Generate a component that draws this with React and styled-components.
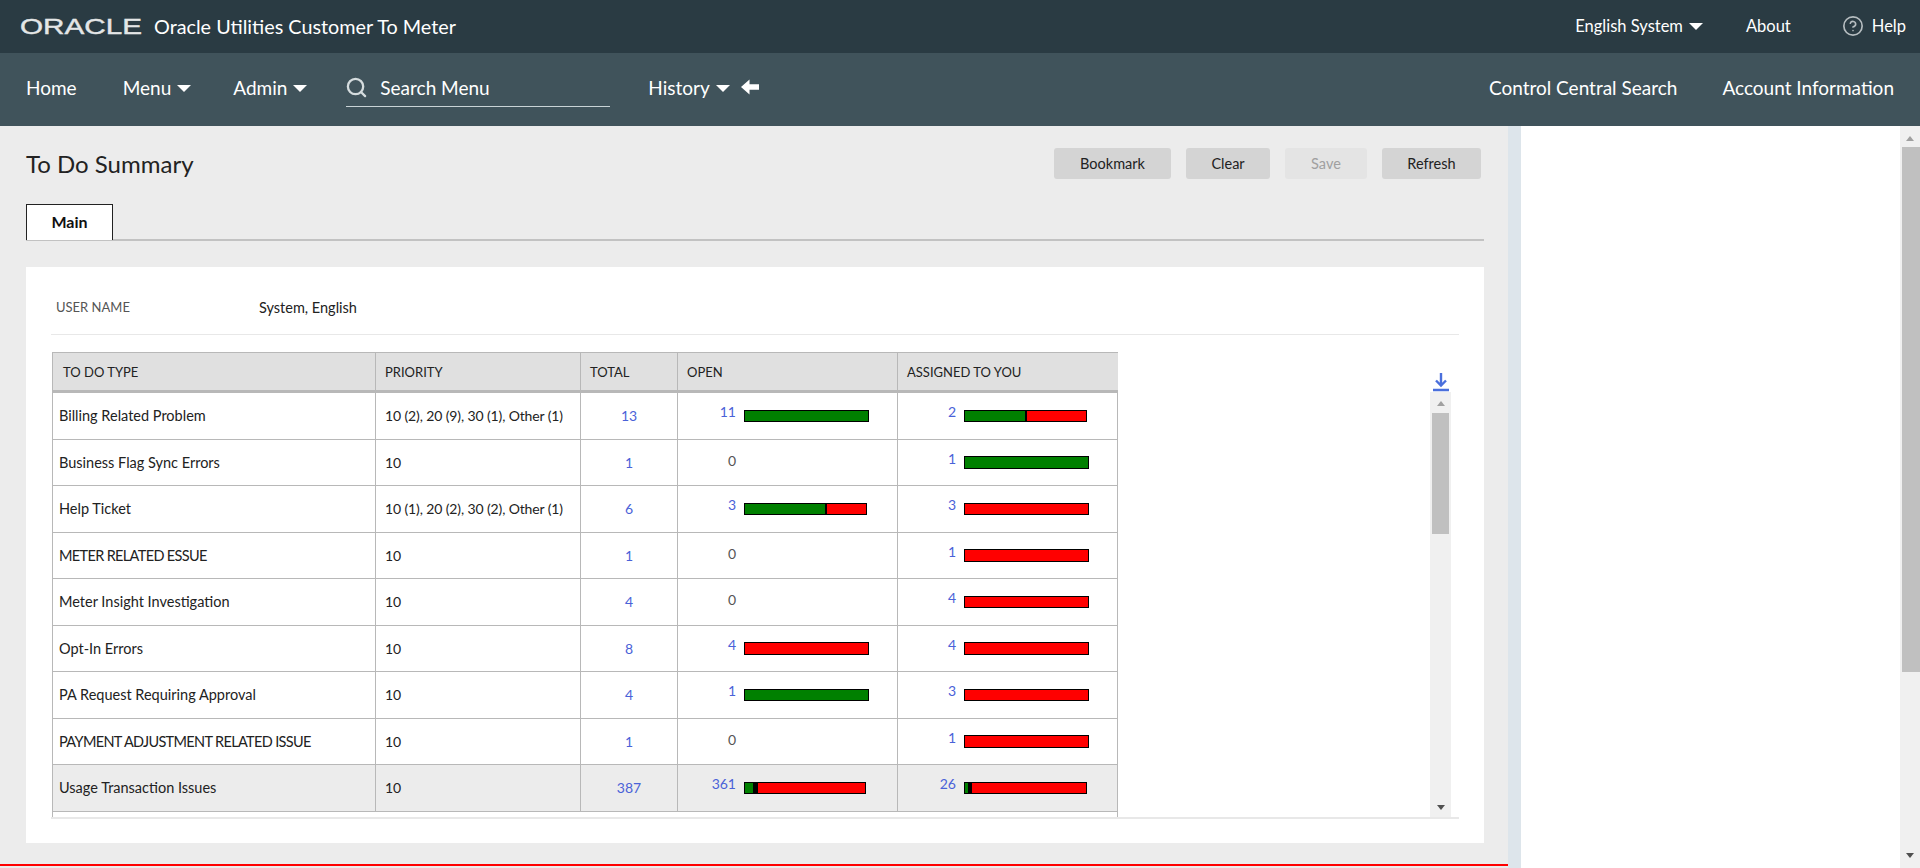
import React from 'react';
import styled, { createGlobalStyle } from 'styled-components';
import { Search, CircleHelp } from 'lucide-react';

const GlobalStyle = createGlobalStyle`
    html, body {
        margin: 0;
        height: 100%;
        overflow: hidden;
        background: #fff;
    }
    * {
        box-sizing: border-box;
    }
    body {
        font-family: Lato, "Open Sans", sans-serif;
    }
`;

const Page = styled.div`
    display: flex;
    flex-direction: column;
    width: 1920px;
    height: 868px;
`;

const TopBar = styled.header`
    display: flex;
    align-items: center;
    height: 53px;
    padding: 0 14px 2px 19px;
    background: #2a3b43;
    color: #fff;
    font-size: 19.8px;
`;

const Logo = styled.svg`
    width: 125px;
    height: 24px;
    margin-right: 10px;
    fill: #e4e6e7;
    stroke: #e4e6e7;
    stroke-width: 0.4;
`;

const Spacer = styled.div`
    flex: 1;
`;

const TopItem = styled.span`
    display: flex;
    align-items: center;
    margin-left: ${props => props.$gap || 0}px;
    font-size: 16.5px;
`;

const HelpIcon = styled(CircleHelp)`
    width: 22px;
    height: 22px;
    margin-right: 8px;
    color: #b6bdc0;
`;

const Caret = styled.i`
    display: inline-block;
    width: 0;
    height: 0;
    margin-left: 6px;
    margin-top: 2px;
    border-left: 7px solid transparent;
    border-right: 7px solid transparent;
    border-top: 7px solid #fff;
`;

const NavBar = styled.nav`
    display: flex;
    align-items: center;
    height: 73px;
    padding: 0 26px 5px 26px;
    background: #40535b;
    color: #fff;
    font-size: 19px;
`;

const NavItem = styled.span`
    display: flex;
    align-items: center;
    margin-left: ${props => props.$gap || 0}px;
`;

const SearchBox = styled.div`
    display: flex;
    align-items: center;
    gap: 12px;
    width: 264px;
    height: 40px;
    margin-left: 39px;
    padding-top: 2px;
    border-bottom: 1px solid #c9d3d6;
`;

const SearchIcon = styled(Search)`
    width: 23px;
    height: 23px;
    margin-left: -1px;
    color: #d5dcde;
`;

const BackIcon = styled.svg`
    width: 18px;
    height: 16px;
    margin-left: 11px;
    fill: #fff;
`;

const Main = styled.div`
    display: flex;
    flex: 1;
    min-height: 0;
`;

const LeftPane = styled.main`
    display: flex;
    flex-direction: column;
    width: 1508px;
    padding: 22px 24px 0 26px;
    background: #ececec;
`;

const TitleRow = styled.div`
    display: flex;
    align-items: center;
    height: 31px;
    padding-right: 3px;
`;

const Title = styled.h1`
    flex: 1;
    margin: 0;
    font-size: 24px;
    font-weight: 400;
    color: #222;
`;

const Button = styled.button`
    width: ${props => props.$w}px;
    height: 31px;
    margin-left: ${props => props.$gap}px;
    border: 0;
    border-radius: 3px;
    background: ${props => props.disabled ? '#e4e4e4' : '#d4d4d4'};
    color: ${props => props.disabled ? '#a0a0a0' : '#222'};
    font-family: inherit;
    font-size: 14.5px;
`;

const TabStrip = styled.div`
    display: flex;
    height: 37px;
    margin-top: 25px;
    border-bottom: 2px solid #c2c2c2;
`;

const Tab = styled.div`
    width: 87px;
    height: 36px;
    padding-top: 7px;
    border: 1px solid #222;
    border-bottom: 0;
    background: #fff;
    color: #111;
    font-size: 16px;
    font-weight: 700;
    text-align: center;
`;

const Card = styled.section`
    height: 576px;
    margin-top: 26px;
    padding: 0 25px;
    background: #fff;
`;

const InfoRow = styled.div`
    display: flex;
    align-items: center;
    height: 68px;
    padding: 13px 0 0 5px;
    border-bottom: 1px solid #e8e8e8;
    font-size: 14.5px;
    color: #222;
`;

const InfoLabel = styled.span`
    width: 203px;
    font-size: 13px;
    color: #555;
`;

const TableArea = styled.div`
    display: flex;
    justify-content: space-between;
    height: 467px;
    margin-top: 17px;
    padding: 0 8px 0 1px;
    border-bottom: 2px solid #e8e8e8;
    overflow: hidden;
`;

const DataTable = styled.div`
    width: 1066px;
    height: 465px;
    overflow: hidden;
    font-size: 14px;
    color: #222;
`;

const Row = styled.div`
    display: grid;
    grid-template-columns: 323px 205px 97px 220px 221px;
    height: ${props => props.$head ? '41px' : '46.5px'};
    border: 1px solid #b8b8b8;
    border-top: 0;
    border-bottom: ${props => props.$head ? '3px' : '1px'} solid #b8b8b8;
    background: ${props => props.$shaded ? '#ececec' : '#fff'};
    &:first-child {
        border-top: 1px solid #b8b8b8;
    }
`;

const HeadCell = styled.div`
    display: flex;
    align-items: center;
    padding-left: ${props => props.$pad || 9}px;
    border-right: 1px solid #b8b8b8;
    background: #e0e0e0;
    font-size: 13px;
    &:last-child {
        border-right: 0;
    }
`;

const NameCell = styled.div`
    display: flex;
    align-items: center;
    padding-left: 6px;
    border-right: 1px solid #b8b8b8;
    font-size: 14.5px;
    letter-spacing: ${props => props.$caps ? '-0.65px' : '0'};
`;

const PriorityCell = styled.div`
    display: flex;
    align-items: center;
    padding-left: 9px;
    border-right: 1px solid #b8b8b8;
    letter-spacing: -0.12px;
`;

const TotalCell = styled.div`
    display: flex;
    align-items: center;
    justify-content: center;
    border-right: 1px solid #b8b8b8;
    color: #4a62d8;
`;

const CountCell = styled.div`
    display: flex;
    align-items: flex-start;
    border-right: 1px solid #b8b8b8;
    &:last-child {
        border-right: 0;
    }
`;

const Count = styled.span`
    width: 58px;
    padding-top: ${props => props.$zero ? 13 : 11}px;
    line-height: 16px;
    text-align: right;
    color: ${props => props.$zero ? '#555' : '#4a62d8'};
`;

const Bar = styled.div`
    display: flex;
    margin: 16.5px 0 0 8px;
    height: 12.5px;
`;

const Segment = styled.div`
    width: ${props => props.$w}px;
    border: 1px solid #000;
    background: ${props => props.$color};
`;

const ScrollColumn = styled.div`
    display: flex;
    flex-direction: column;
    align-items: center;
    width: 21px;
`;

const DownloadIcon = styled.svg`
    width: 18px;
    height: 20px;
    margin-top: 20px;
    stroke: #4a6fdc;
    fill: none;
    stroke-width: 2.4;
`;

const Track = styled.div`
    display: flex;
    flex-direction: column;
    align-items: center;
    flex: 1;
    width: 100%;
    background: #f0f0f0;
`;

const ArrowUp = styled.i`
    width: 0;
    height: 0;
    margin-top: ${props => props.$top}px;
    border-left: 4.5px solid transparent;
    border-right: 4.5px solid transparent;
    border-bottom: 5px solid #a0a0a0;
`;

const ArrowDown = styled.i`
    width: 0;
    height: 0;
    margin-top: auto;
    margin-bottom: ${props => props.$bottom}px;
    border-left: 4.5px solid transparent;
    border-right: 4.5px solid transparent;
    border-top: 5px solid #505050;
`;

const Thumb = styled.div`
    width: ${props => props.$w}px;
    height: ${props => props.$h}px;
    margin-top: ${props => props.$top}px;
    margin-left: ${props => props.$left || 0}px;
    background: #c0c0c0;
`;

const RedLine = styled.div`
    height: 2px;
    margin: 21px -24px 0 -26px;
    background: #f00;
`;

const Splitter = styled.div`
    width: 13px;
    background: #dde5eb;
`;

const RightPane = styled.aside`
    display: flex;
    justify-content: flex-end;
    flex: 1;
    background: #fff;
`;

const PageScroll = styled.div`
    display: flex;
    flex-direction: column;
    align-items: center;
    width: 20px;
    background: #f0f0f0;
`;

const G = '#008000';
const R = '#ff0000';
const K = '#000';

const rows = [
    { name: 'Billing Related Problem', priority: '10 (2), 20 (9), 30 (1), Other (1)', total: 13,
      open: 11, openBar: [[G, 125]], mine: 2, mineBar: [[G, 62], [R, 61]] },
    { name: 'Business Flag Sync Errors', priority: '10', total: 1,
      open: 0, openBar: [], mine: 1, mineBar: [[G, 125]] },
    { name: 'Help Ticket', priority: '10 (1), 20 (2), 30 (2), Other (1)', total: 6,
      open: 3, openBar: [[G, 82], [R, 41]], mine: 3, mineBar: [[R, 125]] },
    { name: 'METER RELATED ESSUE', priority: '10', total: 1,
      open: 0, openBar: [], mine: 1, mineBar: [[R, 125]] },
    { name: 'Meter Insight Investigation', priority: '10', total: 4,
      open: 0, openBar: [], mine: 4, mineBar: [[R, 125]] },
    { name: 'Opt-In Errors', priority: '10', total: 8,
      open: 4, openBar: [[R, 125]], mine: 4, mineBar: [[R, 125]] },
    { name: 'PA Request Requiring Approval', priority: '10', total: 4,
      open: 1, openBar: [[G, 125]], mine: 3, mineBar: [[R, 125]] },
    { name: 'PAYMENT ADJUSTMENT RELATED ISSUE', priority: '10', total: 1,
      open: 0, openBar: [], mine: 1, mineBar: [[R, 125]] },
    { name: 'Usage Transaction Issues', priority: '10', total: 387, shaded: true,
      open: 361, openBar: [[G, 10], [K, 3], [R, 109]], mine: 26, mineBar: [[G, 5], [K, 2], [R, 116]] },
];

const Counter = ({ value, segments }) => (
    <CountCell>
        <Count $zero={value === 0}>{value}</Count>
        <Bar>
            {segments.map(([color, w], i) => <Segment key={i} $color={color} $w={w} />)}
        </Bar>
    </CountCell>
);

export default function App() {
    return (
        <Page>
            <GlobalStyle />
            <TopBar>
                <Logo viewBox="0 0 125 24" role="img" aria-label="Oracle">
                    <text x="1" y="20" fontFamily="Liberation Sans" fontSize="22" textLength="122" lengthAdjust="spacingAndGlyphs">ORACLE</text>
                </Logo>
                <span>Oracle Utilities Customer To Meter</span>
                <Spacer />
                <TopItem>English System<Caret /></TopItem>
                <TopItem $gap={43}>About</TopItem>
                <TopItem $gap={51}><HelpIcon strokeWidth={1.8} />Help</TopItem>
            </TopBar>
            <NavBar>
                <NavItem>Home</NavItem>
                <NavItem $gap={46}>Menu<Caret /></NavItem>
                <NavItem $gap={42}>Admin<Caret /></NavItem>
                <SearchBox>
                    <SearchIcon strokeWidth={2.4} />
                    Search Menu
                </SearchBox>
                <NavItem $gap={38}>History<Caret /></NavItem>
                <BackIcon viewBox="0 0 19 16">
                    <polygon points="0,8 9,0 9,5 19,5 19,11 9,11 9,16" />
                </BackIcon>
                <Spacer />
                <NavItem>Control Central Search</NavItem>
                <NavItem $gap={45}>Account Information</NavItem>
            </NavBar>
            <Main>
                <LeftPane>
                    <TitleRow>
                        <Title>To Do Summary</Title>
                        <Button $w={117} $gap={0}>Bookmark</Button>
                        <Button $w={84} $gap={15}>Clear</Button>
                        <Button $w={82} $gap={15} disabled>Save</Button>
                        <Button $w={99} $gap={15}>Refresh</Button>
                    </TitleRow>
                    <TabStrip>
                        <Tab>Main</Tab>
                    </TabStrip>
                    <Card>
                        <InfoRow>
                            <InfoLabel>USER NAME</InfoLabel>
                            System, English
                        </InfoRow>
                        <TableArea>
                            <DataTable>
                                <Row $head>
                                    <HeadCell $pad={10}>TO DO TYPE</HeadCell>
                                    <HeadCell>PRIORITY</HeadCell>
                                    <HeadCell>TOTAL</HeadCell>
                                    <HeadCell>OPEN</HeadCell>
                                    <HeadCell>ASSIGNED TO YOU</HeadCell>
                                </Row>
                                {rows.map(r => (
                                    <Row key={r.name} $shaded={r.shaded}>
                                        <NameCell $caps={r.name === r.name.toUpperCase()}>{r.name}</NameCell>
                                        <PriorityCell>{r.priority}</PriorityCell>
                                        <TotalCell>{r.total}</TotalCell>
                                        <Counter value={r.open} segments={r.openBar} />
                                        <Counter value={r.mine} segments={r.mineBar} />
                                    </Row>
                                ))}
                                <Row />
                            </DataTable>
                            <ScrollColumn>
                                <DownloadIcon viewBox="0 0 18 20">
                                    <path d="M9 1v12M4 8.5l5 5 5-5M1 18h16" />
                                </DownloadIcon>
                                <Track>
                                    <ArrowUp $top={9} />
                                    <Thumb $w={17} $h={121} $top={7} />
                                    <ArrowDown $bottom={7} />
                                </Track>
                            </ScrollColumn>
                        </TableArea>
                    </Card>
                    <RedLine />
                </LeftPane>
                <Splitter />
                <RightPane>
                    <PageScroll>
                        <ArrowUp $top={10} />
                        <Thumb $w={18} $h={525} $top={6} $left={2} />
                        <ArrowDown $bottom={10} />
                    </PageScroll>
                </RightPane>
            </Main>
        </Page>
    );
}
